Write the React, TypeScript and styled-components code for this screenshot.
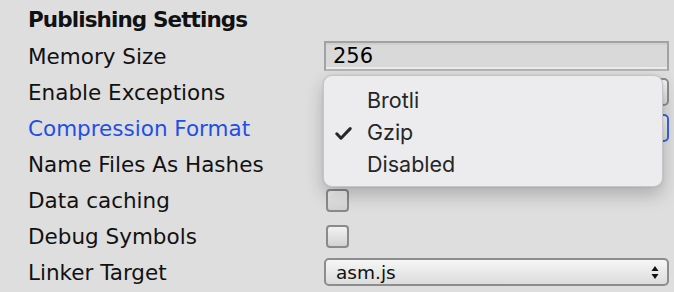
import styled, { createGlobalStyle } from "styled-components";

const GlobalStyle = createGlobalStyle`
  html, body {
    margin: 0;
    padding: 0;
    background: #dedede;
  }
  body {
    font-family: "DejaVu Sans", sans-serif;
  }
`;

const Panel = styled.div`
  width: 674px;
  height: 292px;
  padding-left: 28px;
  box-sizing: border-box;
  background: #dedede;
  overflow: hidden;
`;

const Title = styled.div`
  height: 38px;
  display: flex;
  align-items: center;
  font-size: 21.5px;
  font-weight: bold;
  letter-spacing: -0.9px;
  color: #111;
`;

const Row = styled.div`
  display: grid;
  grid-template-columns: 296px 345px;
  align-items: center;
  height: 36px;
`;

const Label = styled.div<{ $focused?: boolean }>`
  font-size: 21.5px;
  color: ${(p) => (p.$focused ? "#1d4fe8" : "#111")};
  white-space: nowrap;
`;

const Cell = styled.div`
  position: relative;
  display: flex;
  align-items: center;
  height: 100%;
`;

const NumberField = styled.div`
  box-sizing: border-box;
  width: 345px;
  height: 30px;
  border: 2px solid #a2a2a2;
  border-bottom-color: #b4b4b4;
  background: #d9d9d9;
  box-shadow: inset 0 -2px 0 #ececec, inset 0 2px 0 #cfcfcf;
  display: flex;
  align-items: center;
  padding-left: 7px;
  font-size: 21px;
  color: #000;
`;

const Select = styled.div<{ $focused?: boolean }>`
  box-sizing: border-box;
  width: 345px;
  height: 28px;
  border-radius: 5px;
  border: ${(p) => (p.$focused ? "2px solid #3c62dc" : "2px solid #8d8d8d")};
  background: linear-gradient(#f6f6f6, #dcdcdc);
  display: flex;
  align-items: center;
  justify-content: space-between;
  padding: 0 8px 0 10px;
  font-size: 18.5px;
  color: #111;
`;

const Checkbox = styled.div`
  box-sizing: border-box;
  width: 23px;
  height: 23px;
  margin-left: 2px;
  border-radius: 4px;
  border: 2px solid #8a8a8a;
  background: linear-gradient(#f2f2f2, #d2d2d2);
`;

const Menu = styled.div`
  position: absolute;
  left: -1px;
  top: -35px;
  width: 340px;
  height: 112px;
  box-sizing: border-box;
  border-radius: 9px;
  border: 1px solid #c6c6c8;
  background: #ececee;
  box-shadow: 0 8px 18px rgba(0, 0, 0, 0.22), 0 0 2px rgba(0, 0, 0, 0.15);
  padding-top: 8px;
  z-index: 5;
`;

const MenuItem = styled.div`
  height: 32px;
  display: flex;
  align-items: center;
  padding-left: 43px;
  position: relative;
  font-family: Inter, "Noto Sans", sans-serif;
  font-size: 21.5px;
  color: #262626;
`;

const Check = styled.svg`
  position: absolute;
  left: 11px;
  top: 11px;
`;

const Arrows = styled.svg`
  display: block;
`;

export default function App() {
  return (
    <>
      <GlobalStyle />
      <Panel>
        <Title>Publishing Settings</Title>
        <Row>
          <Label>Memory Size</Label>
          <Cell>
            <NumberField>256</NumberField>
          </Cell>
        </Row>
        <Row>
          <Label>Enable Exceptions</Label>
          <Cell>
            <Select />
          </Cell>
        </Row>
        <Row>
          <Label $focused>Compression Format</Label>
          <Cell>
            <Select $focused />
            <Menu>
              <MenuItem>Brotli</MenuItem>
              <MenuItem>
                <Check width="17" height="13" viewBox="0 0 17 13">
                  <path d="M1.8 6.8 L6 11.2 L15.2 1.6" fill="none" stroke="#262626" strokeWidth="3" strokeLinecap="round" strokeLinejoin="round" />
                </Check>
                Gzip
              </MenuItem>
              <MenuItem>Disabled</MenuItem>
            </Menu>
          </Cell>
        </Row>
        <Row>
          <Label>Name Files As Hashes</Label>
          <Cell />
        </Row>
        <Row>
          <Label>Data caching</Label>
          <Cell>
            <Checkbox />
          </Cell>
        </Row>
        <Row>
          <Label>Debug Symbols</Label>
          <Cell>
            <Checkbox />
          </Cell>
        </Row>
        <Row>
          <Label>Linker Target</Label>
          <Cell>
            <Select>
              asm.js
              <Arrows width="8" height="13" viewBox="0 0 8 13">
                <path d="M4 0 L7.5 5 L0.5 5 Z" fill="#111" />
                <path d="M4 13 L7.5 8 L0.5 8 Z" fill="#111" />
              </Arrows>
            </Select>
          </Cell>
        </Row>
      </Panel>
    </>
  );
}
